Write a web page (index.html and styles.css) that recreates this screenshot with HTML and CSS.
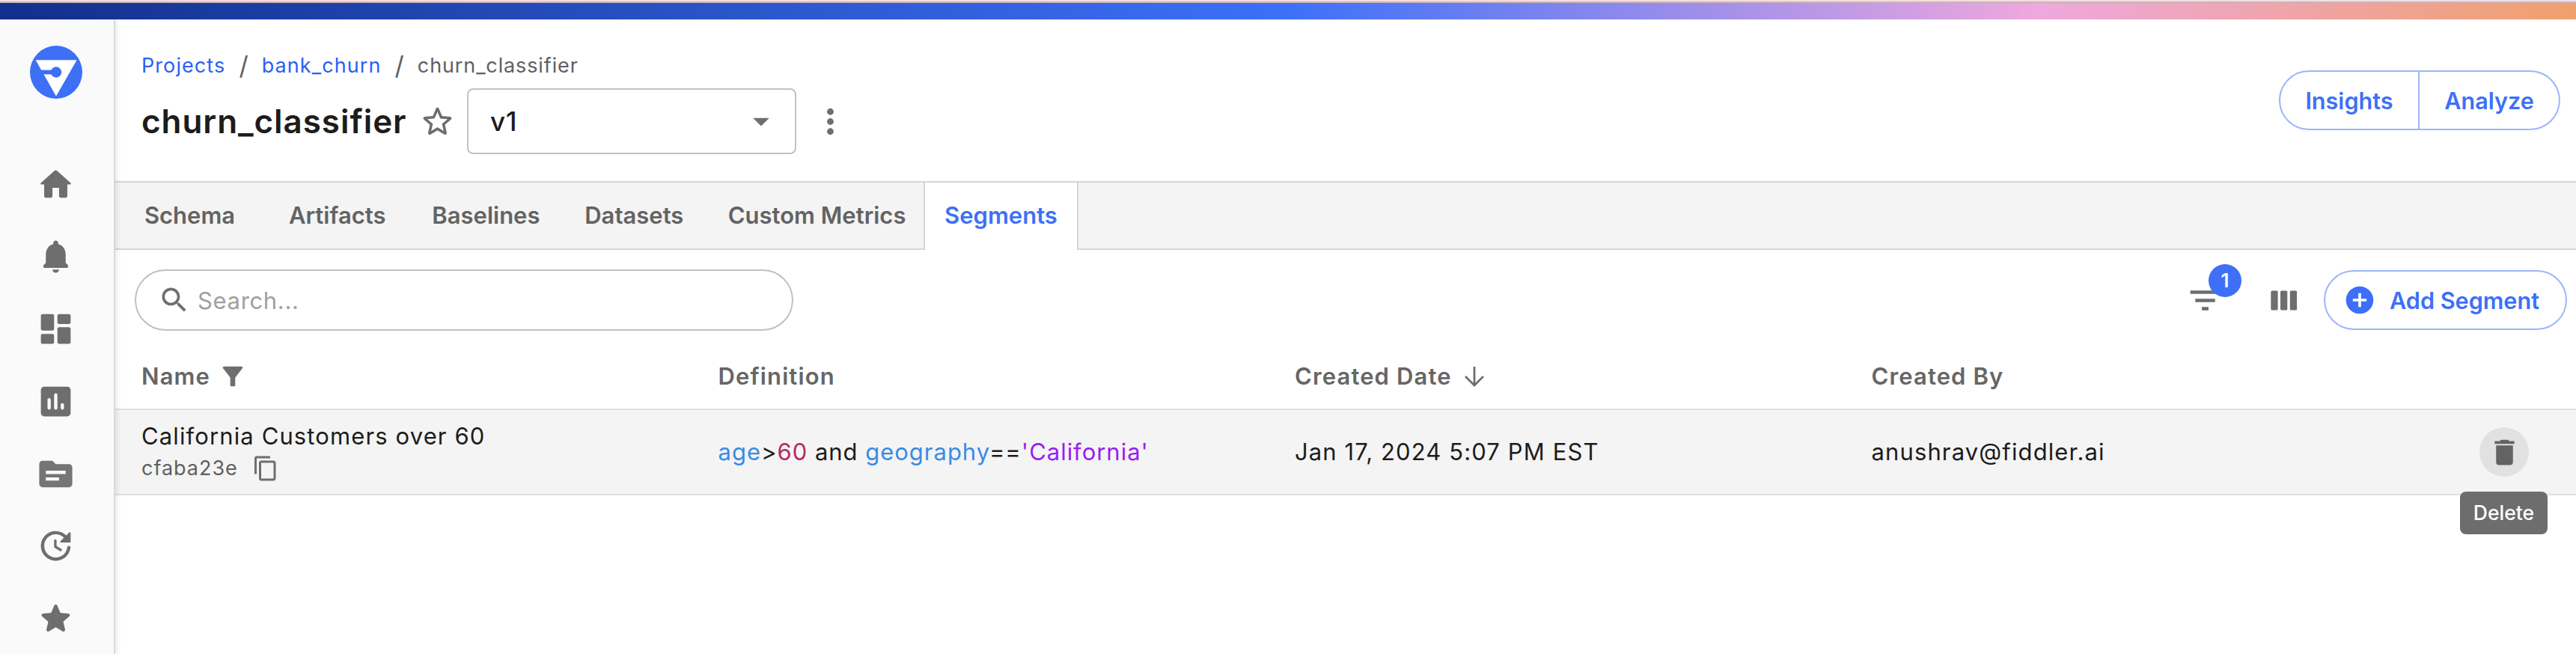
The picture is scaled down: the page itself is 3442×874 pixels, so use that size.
FILE: index.html
```html
<!DOCTYPE html>
<html lang="en">
<head>
<meta charset="utf-8">
<title>churn_classifier - Segments</title>
<link rel="stylesheet" href="styles.css">
</head>
<body>
<div class="brand-strip"></div>
<div class="app">
  <nav class="sidebar">
    <svg class="logo" viewBox="0 0 70 71"><ellipse cx="35" cy="35.5" rx="35" ry="35.5" fill="#3d70f7"/><path d="M7.6 19.3h55L35 67.4z" fill="#fff"/><path d="M12 32.6h19v5.8H12z" fill="#3d70f7"/><circle cx="35" cy="35.5" r="7.2" fill="#3d70f7"/></svg>
    <div class="nav-list">
      <svg class="nav-icon" viewBox="0 0 24 24"><path d="M10 19v-5h4v5c0 .55.45 1 1 1h3c.55 0 1-.45 1-1v-7h1.7c.46 0 .68-.57.33-.87L12.67 3.6c-.38-.34-.96-.34-1.34 0l-8.36 7.53c-.34.3-.13.87.33.87H5v7c0 .55.45 1 1 1h3c.55 0 1-.45 1-1z"/></svg>
      <svg class="nav-icon" viewBox="0 0 24 24"><path d="M12 22c1.1 0 2-.9 2-2h-4c0 1.1.89 2 2 2zm6-6v-5c0-3.07-1.64-5.64-4.5-6.32V4c0-.83-.67-1.5-1.5-1.5s-1.5.67-1.5 1.5v.68C7.63 5.36 6 7.92 6 11v5l-1.29 1.29c-.63.63-.19 1.71.7 1.71h13.17c.89 0 1.34-1.08.71-1.71L18 16z"/></svg>
      <svg class="nav-icon" viewBox="0 0 24 24"><path d="M4 13h6c.55 0 1-.45 1-1V4c0-.55-.45-1-1-1H4c-.55 0-1 .45-1 1v8c0 .55.45 1 1 1zm0 8h6c.55 0 1-.45 1-1v-4c0-.55-.45-1-1-1H4c-.55 0-1 .45-1 1v4c0 .55.45 1 1 1zm10 0h6c.55 0 1-.45 1-1v-8c0-.55-.45-1-1-1h-6c-.55 0-1 .45-1 1v8c0 .55.45 1 1 1zM13 4v4c0 .55.45 1 1 1h6c.55 0 1-.45 1-1V4c0-.55-.45-1-1-1h-6c-.55 0-1 .45-1 1z"/></svg>
      <svg class="nav-icon" viewBox="0 0 24 24"><path d="M19 3H5c-1.1 0-2 .9-2 2v14c0 1.1.9 2 2 2h14c1.1 0 2-.9 2-2V5c0-1.1-.9-2-2-2zM8 17c-.55 0-1-.45-1-1v-5c0-.55.45-1 1-1s1 .45 1 1v5c0 .55-.45 1-1 1zm4 0c-.55 0-1-.45-1-1V8c0-.55.45-1 1-1s1 .45 1 1v8c0 .55-.45 1-1 1zm4 0c-.55 0-1-.45-1-1v-2c0-.55.45-1 1-1s1 .45 1 1v2c0 .55-.45 1-1 1z"/></svg>
      <svg class="nav-icon nav-icon-light" viewBox="0 0 24 24"><path d="M20 6h-8l-2-2H4c-1.1 0-1.99.9-1.99 2L2 18c0 1.1.9 2 2 2h16c1.1 0 2-.9 2-2V8c0-1.1-.9-2-2-2zm-6 10H6v-2h8v2zm4-4H6v-2h12v2z"/></svg>
      <svg class="nav-icon" viewBox="0 0 24 24"><path d="M11 8.75v3.68c0 .35.19.68.49.86l3.12 1.85c.36.21.82.09 1.03-.26.21-.36.1-.82-.26-1.03l-2.88-1.71v-3.4c0-.4-.34-.74-.75-.74s-.75.34-.75.75zm10 .75V4.21c0-.45-.54-.67-.85-.35l-1.78 1.78c-1.81-1.81-4.39-2.85-7.21-2.6-4.19.38-7.64 3.75-8.1 7.94C2.46 16.4 6.69 21 12 21c4.59 0 8.38-3.44 8.93-7.88.07-.6-.4-1.12-1-1.12-.5 0-.92.37-.98.86-.43 3.49-3.44 6.19-7.05 6.14-3.71-.05-6.84-3.18-6.9-6.9C4.94 8.2 8.11 5 12 5c1.93 0 3.68.79 4.95 2.05l-2.09 2.09c-.32.32-.1.86.35.86h5.29c.28 0 .5-.22.5-.5z"/></svg>
      <svg class="nav-icon" viewBox="0 0 24 24"><path d="M12 17.27l4.15 2.51c.76.46 1.69-.22 1.49-1.08l-1.1-4.72 3.67-3.18c.67-.58.31-1.68-.57-1.75l-4.83-.41-1.89-4.46c-.34-.81-1.5-.81-1.84 0L9.19 8.63l-4.83.41c-.88.07-1.24 1.17-.57 1.75l3.67 3.18-1.1 4.72c-.2.86.73 1.54 1.49 1.08l4.15-2.5z"/></svg>
    </div>
  </nav>
  <main class="main">
    <header class="header">
      <div class="heading">
        <div class="breadcrumb">
          <a class="crumb-link">Projects</a><span class="crumb-sep">/</span><a class="crumb-link">bank_churn</a><span class="crumb-sep">/</span><span class="crumb-current">churn_classifier</span>
        </div>
        <div class="title-row">
          <h1 class="title">churn_classifier</h1>
          <svg class="title-star" viewBox="0 0 24 24"><path d="M19.65 9.04l-4.84-.42-1.89-4.45c-.34-.81-1.5-.81-1.84 0L9.19 8.63l-4.83.41c-.88.07-1.24 1.17-.57 1.75l3.67 3.18-1.1 4.72c-.2.86.73 1.54 1.49 1.08l4.15-2.5 4.15 2.51c.76.46 1.69-.22 1.49-1.08l-1.1-4.73 3.67-3.18c.67-.58.32-1.68-.56-1.75zM12 15.4l-3.76 2.27 1-4.28-3.32-2.88 4.38-.38L12 6.1l1.71 4.04 4.38.38-3.32 2.88 1 4.28L12 15.4z"/></svg>
          <div class="version-select">
            <span>v1</span>
            <svg class="caret" viewBox="0 0 24 24"><path d="M7 10l5 5 5-5z"/></svg>
          </div>
          <svg class="more" viewBox="0 0 24 24"><circle cx="12" cy="6" r="2"/><circle cx="12" cy="12" r="2"/><circle cx="12" cy="18" r="2"/></svg>
        </div>
      </div>
      <div class="button-group">
        <div class="group-button group-first">Insights</div>
        <div class="group-button group-last">Analyze</div>
      </div>
    </header>
    <div class="tabs">
      <div class="tab tab-schema">Schema</div>
      <div class="tab tab-artifacts">Artifacts</div>
      <div class="tab tab-baselines">Baselines</div>
      <div class="tab tab-datasets">Datasets</div>
      <div class="tab tab-metrics">Custom Metrics</div>
      <div class="tab tab-active">Segments</div>
      <div class="tab-rest"></div>
    </div>
    <div class="toolbar">
      <div class="search">
        <svg class="search-icon" viewBox="0 0 24 24"><path d="M15.5 14h-.79l-.28-.27C15.41 12.59 16 11.11 16 9.5 16 5.91 13.09 3 9.5 3S3 5.91 3 9.5 5.91 16 9.5 16c1.61 0 3.09-.59 4.23-1.57l.27.28v.79l5 4.99L20.49 19l-4.99-5zm-6 0C7.01 14 5 11.99 5 9.5S7.01 5 9.5 5 14 7.01 14 9.5 11.99 14 9.5 14z"/></svg>
        <span>Search...</span>
      </div>
      <div class="tools">
        <div class="filter">
          <svg class="tool-icon" viewBox="0 0 24 24"><path d="M10 18h4v-2h-4v2zM3 6v2h18V6H3zm3 7h12v-2H6v2z"/></svg>
          <span class="badge">1</span>
        </div>
        <svg class="tool-icon columns-icon" viewBox="0 0 53 53"><rect x="9.3" y="13.5" width="9.3" height="26" rx="1.5"/><rect x="22" y="13.5" width="9.3" height="26" rx="1.5"/><rect x="34.8" y="13.5" width="9.3" height="26" rx="1.5"/></svg>
        <div class="add-button">
          <svg class="add-icon" viewBox="0 0 24 24"><path d="M12 2C6.48 2 2 6.48 2 12s4.48 10 10 10 10-4.48 10-10S17.52 2 12 2zm5 11h-4v4h-2v-4H7v-2h4V7h2v4h4v2z"/></svg>
          <span>Add Segment</span>
        </div>
      </div>
    </div>
    <div class="table">
      <div class="row head-row">
        <div class="cell head-cell"><span>Name</span><svg class="head-icon" viewBox="0 0 24 24"><path d="M4.25 5.61C6.27 8.2 10 13 10 13v6c0 .55.45 1 1 1h2c.55 0 1-.45 1-1v-6s3.72-4.8 5.74-7.39c.51-.66.04-1.61-.79-1.61H5.04c-.83 0-1.3.95-.79 1.61z"/></svg></div>
        <div class="cell head-cell">Definition</div>
        <div class="cell head-cell"><span>Created Date</span><svg class="head-icon head-arrow" viewBox="0 0 40 40"><path d="M20 7v25M8 20l12 12 12-12"/></svg></div>
        <div class="cell head-cell">Created By</div>
      </div>
      <div class="row data-row">
        <div class="cell name-cell">
          <div class="segment-name">California Customers over 60</div>
          <div class="segment-id"><span>cfaba23e</span><svg class="copy-icon" viewBox="0 0 24 24"><path d="M16 1H4c-1.1 0-2 .9-2 2v14h2V3h12V1zm3 4H8c-1.1 0-2 .9-2 2v14c0 1.1.9 2 2 2h11c1.1 0 2-.9 2-2V7c0-1.1-.9-2-2-2zm0 16H8V7h11v14z"/></svg></div>
        </div>
        <div class="cell"><code class="definition"><span class="field">age</span><span class="op">&gt;</span><span class="number">60</span> and <span class="field">geography</span><span class="op">==</span><span class="string">'California'</span></code></div>
        <div class="cell">Jan 17, 2024 5:07 PM EST</div>
        <div class="cell">anushrav@fiddler.ai</div>
        <div class="delete">
          <svg class="delete-icon" viewBox="0 0 24 24"><path d="M6 19c0 1.1.9 2 2 2h8c1.1 0 2-.9 2-2V7H6v12zM19 4h-3.5l-1-1h-5l-1 1H5v2h14V4z"/></svg>
          <span class="tooltip">Delete</span>
        </div>
      </div>
    </div>
  </main>
</div>
</body>
</html>
```
FILE: styles.css
```css
* { box-sizing: border-box; }

body {
  margin: 0;
  height: 874px;
  overflow: hidden;
  display: flex;
  flex-direction: column;
  background: #fff;
  font-family: Inter, "Liberation Sans", sans-serif;
  font-size: 31px;
  letter-spacing: 1.12px;
  color: #1c1c1c;
  white-space: nowrap;
}

svg { display: block; flex: none; fill: #6e6e6e; }

.brand-strip {
  flex: none;
  height: 26px;
  border-top: 2px solid #f6dde2;
  background: linear-gradient(#c8b4b7, #c8b4b7) 0 0 / 100% 2px no-repeat,
    linear-gradient(93deg, #12308c 0%, #3d70f8 50%, #eea8de 79%, #f0a06c 100%);
}

.app { flex: 1; display: flex; min-height: 0; }

.sidebar {
  flex: none;
  width: 154px;
  padding: 35px 3px 0 0;
  display: flex;
  flex-direction: column;
  align-items: center;
  background: #fafafa;
  border-right: 2px solid #dadada;
  box-shadow: 1px 0 8px rgba(0, 0, 0, .12);
  z-index: 1;
}
.logo { width: 70px; height: 71px; }
.nav-list { margin-top: 87.5px; display: flex; flex-direction: column; gap: 43.8px; }
.nav-icon { width: 53px; height: 53px; }
.nav-icon-light { fill: #757575; }

.main { flex: 1; min-width: 0; display: flex; flex-direction: column; }

.header {
  height: 216px;
  padding: 41px 21px 0 35px;
  display: flex;
  justify-content: space-between;
}
.breadcrumb {
  height: 40px;
  display: flex;
  align-items: center;
  font-size: 27px;
  letter-spacing: 1.08px;
}
.crumb-link { color: #2a61f3; }
.crumb-sep { width: 48.4px; text-align: center; font-size: 34px; letter-spacing: 0; color: #616161; }
.crumb-current { color: #606060; letter-spacing: .88px; }

.title-row { height: 88px; margin-top: 11px; display: flex; align-items: center; }
.title { width: 369px; margin: 0; font-size: 44px; font-weight: 600; letter-spacing: .93px; }
.title-star { width: 53px; height: 53px; }
.version-select {
  width: 440px;
  height: 88px;
  margin-left: 13px;
  padding: 0 19px 0 29px;
  display: flex;
  align-items: center;
  justify-content: space-between;
  border: 2px solid #c2c2c2;
  border-radius: 8px;
  font-size: 35px;
  font-weight: 500;
  letter-spacing: .8px;
}
.caret { width: 52px; height: 52px; }
.more { width: 53px; height: 53px; margin-left: 19px; }

.button-group {
  height: 80px;
  margin-top: 27px;
  display: flex;
  color: #3d70f7;
  font-size: 30.6px;
  font-weight: 600;
  letter-spacing: 0;
}
.group-button {
  width: 188px;
  border: 2px solid #9db5fb;
  display: flex;
  align-items: center;
  justify-content: center;
}
.group-first { border-radius: 40px 0 0 40px; }
.group-last { border-left: 0; border-radius: 0 40px 40px 0; }

.tabs {
  height: 92px;
  display: flex;
  border-top: 2px solid #d6d6d6;
  color: #636363;
  font-weight: 600;
  letter-spacing: 0;
}
.tab, .tab-rest { background: #f4f4f4; border-bottom: 2px solid #d6d6d6; }
.tab { display: flex; align-items: center; justify-content: center; padding-bottom: 1px; }
.tab-rest { flex: 1; }
.tab-schema { width: 199px; }
.tab-artifacts { width: 195.4px; }
.tab-baselines { width: 202px; }
.tab-datasets { width: 193.8px; }
.tab-metrics { width: 289.8px; padding-left: 5px; }
.tab-active {
  width: 207px;
  background: #fff;
  border: 2px solid #d6d6d6;
  border-width: 0 2px;
  padding-bottom: 3px;
  color: #3d70f7;
}

.toolbar {
  height: 126px;
  padding: 26px 12px 18px 26px;
  display: flex;
  align-items: center;
  justify-content: space-between;
}
.search {
  width: 880px;
  height: 82px;
  padding-left: 29px;
  display: flex;
  align-items: center;
  gap: 9px;
  border: 2px solid #c1c1c1;
  border-radius: 41px;
  color: #a0a0a0;
  letter-spacing: .66px;
}
.search-icon { width: 44px; height: 44px; }
.tools { display: flex; align-items: center; }
.filter { position: relative; }
.tool-icon { width: 53px; height: 53px; }
.badge {
  position: absolute;
  left: 31px;
  top: -22px;
  width: 44px;
  height: 44px;
  border-radius: 50%;
  background: #3d70f7;
  color: #fff;
  font-size: 26px;
  font-weight: 600;
  letter-spacing: 0;
  line-height: 44px;
  text-align: center;
}
.columns-icon { margin: 0 27.5px 0 51.5px; }
.add-button {
  width: 325px;
  height: 80px;
  padding-left: 24px;
  display: flex;
  align-items: center;
  gap: 18px;
  border: 2px solid #9db5fb;
  border-radius: 40px;
  color: #3d70f7;
  font-size: 30.6px;
  font-weight: 600;
  letter-spacing: 0;
}
.add-icon { width: 44px; height: 44px; fill: #3d70f7; }

.row { display: grid; grid-template-columns: 770.5px 770.5px 770.5px 1fr auto; align-items: center; padding-right: 63px; }
.cell { padding-left: 35px; line-height: 36px; }
.head-row { height: 86px; padding-bottom: 1px; }
.head-cell { display: flex; align-items: center; gap: 10px; color: #666; font-weight: 600; }
.head-icon { width: 40px; height: 40px; }
.head-arrow { fill: none; stroke: #6e6e6e; stroke-width: 2.8; }
.data-row { height: 116px; background: #f4f4f4; border: 2px solid #e0e0e0; border-width: 2px 0; }
.segment-name { line-height: 43px; }
.segment-id {
  height: 44px;
  display: flex;
  align-items: center;
  gap: 19px;
  font-size: 27px;
  letter-spacing: .97px;
  color: #606060;
}
.copy-icon { width: 36px; height: 36px; }
.definition { font: inherit; letter-spacing: .98px; }
.field { color: #3a8ce5; }
.number { color: #b52a63; }
.string { color: #9b1cf5; }

.delete {
  position: relative;
  width: 66px;
  height: 66px;
  border-radius: 50%;
  background: #e1e1e1;
  display: flex;
  align-items: center;
  justify-content: center;
}
.delete-icon { width: 45px; height: 45px; fill: #636363; }
.tooltip {
  position: absolute;
  left: -26px;
  top: 86px;
  width: 117px;
  height: 57px;
  border-radius: 8px;
  background: #6d6d6d;
  color: #fff;
  font-size: 26.5px;
  font-weight: 500;
  letter-spacing: 0;
  line-height: 57px;
  text-align: center;
}
```
